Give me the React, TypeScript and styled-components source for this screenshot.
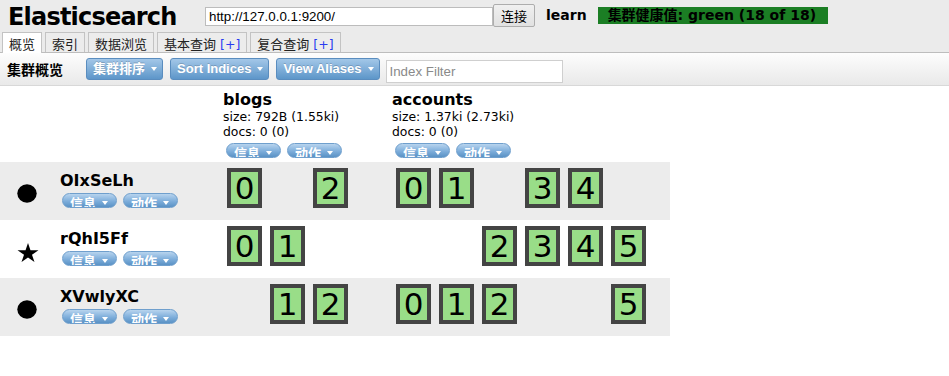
import React from "react";
import styled, { createGlobalStyle } from "styled-components";

const CJK = `"Noto Sans CJK SC", "DejaVu Sans", sans-serif`;
const VERD = `"DejaVu Sans", "Noto Sans CJK SC", sans-serif`;
const ARIAL = `"Liberation Sans", "Noto Sans CJK SC", sans-serif`;

const GlobalStyle = createGlobalStyle`
  html, body { margin: 0; padding: 0; background: #fff; }
  body { font-family: ${VERD}; font-size: 12px; color: #000; }
  * { box-sizing: border-box; }
`;

const Header = styled.header`
  background: #ebebeb;
  height: 53px;
  border-bottom: 1px solid #bdbdbd;
`;

const TopBar = styled.div`
  display: flex;
  align-items: flex-start;
  height: 32px;
`;

const Title = styled.h1`
  margin: 3px 0 0 8px;
  width: 197px;
  font: bold 24px/28px ${VERD};
  letter-spacing: -0.8px;
`;

const UrlInput = styled.input`
  margin-top: 7px;
  width: 288px;
  height: 19px;
  border: 1px solid #bcbcbc;
  padding: 0 3px;
  font: 13.33px ${ARIAL};
  color: #000;
  background: #fff;
  outline: none;
`;

const ConnectButton = styled.button`
  margin-top: 4px;
  width: 42px;
  height: 23px;
  padding: 0;
  border: 1px solid #adadad;
  border-radius: 2px;
  background: linear-gradient(#f0f0f0, #e1e1e1);
  font: 13px/21px ${CJK};
  color: #000;
`;

const ClusterName = styled.span`
  margin: 7px 0 0 11px;
  font: bold 14px/17px ${VERD};
`;

const Health = styled.span`
  margin: 7px 0 0 11px;
  height: 17px;
  padding: 0 12px 0 10px;
  background: #1b7e24;
  font: bold 14px/17px ${VERD};
  color: #000;
  white-space: nowrap;
`;

const Tabs = styled.nav`
  display: flex;
  gap: 3px;
  padding-left: 2px;
  height: 20px;
`;

const Tab = styled.div<{ $active?: boolean }>`
  height: ${(p) => (p.$active ? 21 : 20)}px;
  padding: 2px 6px 0;
  border: 1px solid #c3c3c3;
  border-bottom: none;
  background: ${(p) => (p.$active ? "#fff" : "#ececec")};
  font: 13px/18px ${CJK};
  color: #222;
  white-space: nowrap;
  position: relative;
`;

const Plus = styled.span`
  color: #2a3cf0;
  margin-left: 4px;
  font-family: ${VERD};
  font-size: 12.5px;
`;

const Toolbar = styled.div`
  display: flex;
  align-items: center;
  height: 33px;
  padding-left: 7px;
  background: linear-gradient(#fdfdfd, #e9e9e9);
  border-bottom: 1px solid #d8d8d8;
`;

const ToolbarTitle = styled.span`
  font: bold 14px/20px ${CJK};
  margin-right: 23px;
`;

const DropButton = styled.button`
  display: inline-flex;
  align-items: center;
  height: 22px;
  padding: 0 5px 0 6px;
  border: 1px solid #5a8dbf;
  border-radius: 3px;
  background: linear-gradient(#a3c7e8, #5d96c9);
  color: #fff;
  font: bold 13px/20px ${ARIAL};
  text-shadow: 0 -1px 0 rgba(0, 0, 0, 0.18);
  white-space: nowrap;
  & + & {
    margin-left: 7px;
  }
`;

const Caret = styled.span`
  display: inline-block;
  width: 0;
  height: 0;
  margin-left: 6px;
  border-left: 3.5px solid transparent;
  border-right: 3.5px solid transparent;
  border-top: 4px solid #fff;
`;

const FilterInput = styled.input`
  margin: 5px 0 0 6px;
  width: 177px;
  height: 23px;
  border: 1px solid #cfcfcf;
  padding: 0 3px;
  font: 13.33px ${ARIAL};
  outline: none;
  &::placeholder {
    color: #8a8a8a;
  }
`;

const ClusterTable = styled.section`
  width: 670px;
`;

const HeadRow = styled.div`
  display: grid;
  grid-template-columns: 57px 162px 169px 282px;
  height: 76px;
`;

const IndexHead = styled.div`
  padding: 4px 0 0 4px;
`;

const IndexName = styled.div`
  font: bold 16px/20px ${VERD};
`;

const IndexStat = styled.div`
  font: 12.4px/14.5px ${VERD};
  white-space: nowrap;
`;

const PillRow = styled.div<{ $top: number; $left: number }>`
  display: flex;
  gap: 6px;
  margin-top: ${(p) => p.$top}px;
  margin-left: ${(p) => p.$left}px;
`;

const Pill = styled.span`
  display: flex;
  align-items: flex-start;
  height: 15px;
  padding: 2px 8px 0 7px;
  overflow: hidden;
  border: 1px solid #6f9fcd;
  border-radius: 8px;
  background: linear-gradient(#b8d4ee, #7eaedb 55%, #5a92c5);
  color: #fff;
  font: bold 13px/13px ${CJK};
  white-space: nowrap;
`;

const PillCaret = styled(Caret)`
  margin-top: 5px;
`;

const NodeRow = styled.div<{ $shade: boolean }>`
  display: grid;
  grid-template-columns: 57px 162px 169px 282px;
  height: 58px;
  background: ${(p) => (p.$shade ? "#ececec" : "#fff")};
`;

const IconCell = styled.div<{ $top: number }>`
  padding: ${(p) => p.$top}px 0 0 17px;
`;

const NameCell = styled.div`
  padding: 9.5px 0 0 3px;
`;

const NodeName = styled.div`
  font: bold 16px/18px ${VERD};
`;

const ShardCell = styled.div`
  display: flex;
  padding: 6px 0 0 4px;
`;

const Shard = styled.div`
  width: 35px;
  height: 40px;
  margin: 0 4px;
  border: 4px solid #444;
  background: #99dd88;
  font: 31px/32px ${VERD};
  text-align: center;
  color: #000;
`;

const EmptySlot = styled.div`
  width: 43px;
  height: 40px;
`;

const NodeIcon = ({ kind }: { kind: "master" | "node" }) =>
  kind === "master" ? (
    <svg width="22" height="19" viewBox="-1 -1 2 1.809" preserveAspectRatio="none">
      <polygon
        fill="#000"
        points="0,-1 0.2245,-0.309 0.951,-0.309 0.363,0.118 0.588,0.809 0,0.382 -0.588,0.809 -0.363,0.118 -0.951,-0.309 -0.2245,-0.309"
      />
    </svg>
  ) : (
    <svg width="20" height="19" viewBox="0 0 20 19">
      <ellipse cx="10" cy="9.5" rx="9.7" ry="9.2" fill="#000" />
    </svg>
  );

const ActionPills = ({ top, left }: { top: number; left: number }) => (
  <PillRow $top={top} $left={left}>
    <Pill>
      信息
      <PillCaret />
    </Pill>
    <Pill>
      动作
      <PillCaret />
    </Pill>
  </PillRow>
);

const indices = [
  { name: "blogs", size: "792B (1.55ki)", docs: "0 (0)", slots: 3 },
  { name: "accounts", size: "1.37ki (2.73ki)", docs: "0 (0)", slots: 6 },
];

const nodes: { name: string; kind: "master" | "node"; shards: number[][] }[] = [
  { name: "OIxSeLh", kind: "node", shards: [[0, 2], [0, 1, 3, 4]] },
  { name: "rQhI5Ff", kind: "master", shards: [[0, 1], [2, 3, 4, 5]] },
  { name: "XVwlyXC", kind: "node", shards: [[1, 2], [0, 1, 2, 5]] },
];

export default function App() {
  return (
    <>
      <GlobalStyle />
      <Header>
        <TopBar>
          <Title>Elasticsearch</Title>
          <UrlInput defaultValue="http://127.0.0.1:9200/" />
          <ConnectButton>连接</ConnectButton>
          <ClusterName>learn</ClusterName>
          <Health>集群健康值: green (18 of 18)</Health>
        </TopBar>
        <Tabs>
          <Tab $active>概览</Tab>
          <Tab>索引</Tab>
          <Tab>数据浏览</Tab>
          <Tab>
            基本查询<Plus>[+]</Plus>
          </Tab>
          <Tab>
            复合查询<Plus>[+]</Plus>
          </Tab>
        </Tabs>
      </Header>
      <Toolbar>
        <ToolbarTitle>集群概览</ToolbarTitle>
        <DropButton>
          集群排序
          <Caret />
        </DropButton>
        <DropButton>
          Sort Indices
          <Caret />
        </DropButton>
        <DropButton>
          View Aliases
          <Caret />
        </DropButton>
        <FilterInput placeholder="Index Filter" />
      </Toolbar>
      <ClusterTable>
        <HeadRow>
          <div />
          <div />
          {indices.map((ix) => (
            <IndexHead key={ix.name}>
              <IndexName>{ix.name}</IndexName>
              <IndexStat>size: {ix.size}</IndexStat>
              <IndexStat>docs: {ix.docs}</IndexStat>
              <ActionPills top={3.5} left={3} />
            </IndexHead>
          ))}
        </HeadRow>
        {nodes.map((node, ri) => (
          <NodeRow key={node.name} $shade={ri % 2 === 0}>
            <IconCell $top={node.kind === "master" ? 23 : 22}>
              <NodeIcon kind={node.kind} />
            </IconCell>
            <NameCell>
              <NodeName>{node.name}</NodeName>
              <ActionPills top={3} left={2} />
            </NameCell>
            {indices.map((ix, ci) => (
              <ShardCell key={ix.name}>
                {Array.from({ length: ix.slots }, (_, s) =>
                  node.shards[ci].includes(s) ? (
                    <Shard key={s}>{s}</Shard>
                  ) : (
                    <EmptySlot key={s} />
                  )
                )}
              </ShardCell>
            ))}
          </NodeRow>
        ))}
      </ClusterTable>
    </>
  );
}
